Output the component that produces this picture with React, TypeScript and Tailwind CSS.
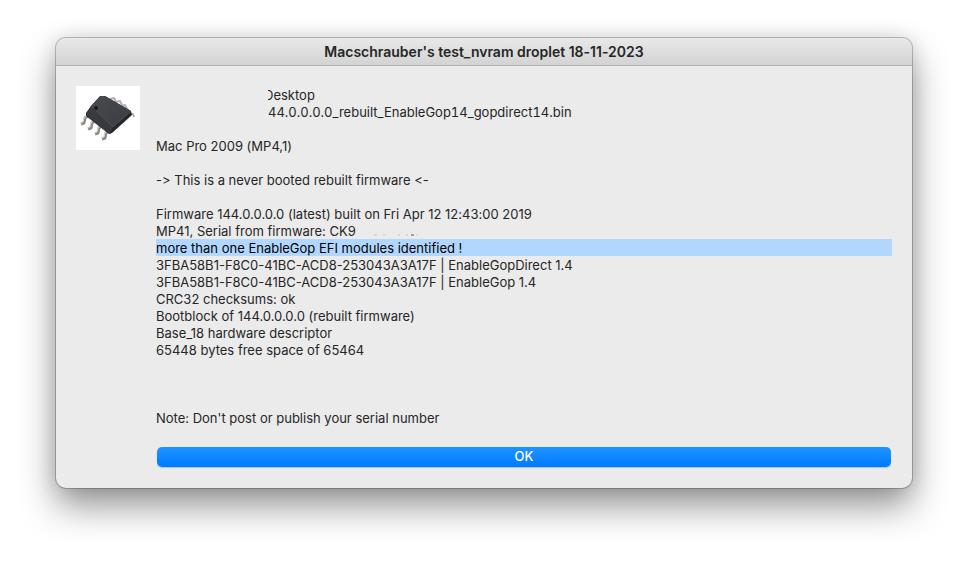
interface LogLine {
  text: string;
  kind?: 'highlight' | 'masked' | 'clipped' | 'serial';
}

const lines: LogLine[] = [
  { text: 'Desktop', kind: 'clipped' },
  { text: '44.0.0.0.0_rebuilt_EnableGop14_gopdirect14.bin', kind: 'masked' },
  { text: '' },
  { text: 'Mac Pro 2009 (MP4,1)' },
  { text: '' },
  { text: '-> This is a never booted rebuilt firmware <-' },
  { text: '' },
  { text: 'Firmware 144.0.0.0.0 (latest) built on Fri Apr 12 12:43:00 2019' },
  { text: 'MP41, Serial from firmware: CK9', kind: 'serial' },
  { text: 'more than one EnableGop EFI modules identified !', kind: 'highlight' },
  { text: '3FBA58B1-F8C0-41BC-ACD8-253043A3A17F | EnableGopDirect 1.4' },
  { text: '3FBA58B1-F8C0-41BC-ACD8-253043A3A17F | EnableGop 1.4' },
  { text: 'CRC32 checksums: ok' },
  { text: 'Bootblock of 144.0.0.0.0 (rebuilt firmware)' },
  { text: 'Base_18 hardware descriptor' },
  { text: '65448 bytes free space of 65464' },
  { text: '' },
  { text: '' },
  { text: '' },
  { text: "Note: Don't post or publish your serial number" },
];

function ChipIcon() {
  return (
    <svg viewBox="0 0 64 64" className="size-16 shrink-0 bg-white" role="img" aria-label="Flash chip">
      <defs>
        <linearGradient id="chip-top" x1="0" y1="0" x2="1" y2="1">
          <stop offset="0" stopColor="#4a4b50" />
          <stop offset="1" stopColor="#3b3c41" />
        </linearGradient>
      </defs>
      {/* rear pins */}
      <g stroke="#b5b0ab" strokeWidth="2" fill="none" strokeLinejoin="round">
        <path d="M34 13l4-1 2 4" />
        <path d="M40 16l4-1 2 4" />
        <path d="M46 20l3-1 2 4" />
        <path d="M53 28l4 0 1 3" />
      </g>
      {/* front pins */}
      <g fill="none" stroke="#8f8a85" strokeWidth="3" strokeLinejoin="round">
        <path d="M13 29l-4 3-1 5-3 1" />
        <path d="M20 34l-4 3-1 5-3 1" />
        <path d="M27 39l-4 3-1 5-3 1" />
        <path d="M34 44l-4 3-1 5-3 1" />
      </g>
      <g fill="none" stroke="#d8d3cd" strokeWidth="1">
        <path d="M12 29l-4 3-1 4-2 1" />
        <path d="M19 34l-4 3-1 4-2 1" />
        <path d="M26 39l-4 3-1 4-2 1" />
        <path d="M33 44l-4 3-1 4-2 1" />
      </g>
      <path d="M10 27L15 20 24 10l5 0 26 15 1 4-20 18-3 1-23-18z" fill="#2b2c30" />
      <path d="M15 20L25 10l4 0 26 15-18 16z" fill="url(#chip-top)" />
      <path d="M15 20l22 21-3 7-24-19z" fill="#393a3f" />
      <path d="M37 41l18-16v4L34 48z" fill="#26272b" />
      <path d="M15 20L37 41l18-16" fill="none" stroke="#505156" strokeWidth="1" />
      <ellipse cx="20" cy="22" rx="2" ry="2" fill="#17181b" />
    </svg>
  );
}

function MessageLine({ text, kind }: LogLine) {
  if (kind === 'highlight') {
    return <p className="h-[17px] bg-[#b2d7ff] pt-px text-black">{text}</p>;
  }
  if (kind === 'clipped') {
    return (
      <p className="ml-28 h-[17px] overflow-x-clip pt-px">
        <span className="-ml-1">{text}</span>
      </p>
    );
  }
  if (kind === 'masked') {
    return <p className="ml-28 h-[17px] pt-px tabular-nums">{text}</p>;
  }
  if (kind === 'serial') {
    return (
      <p className="flex h-[17px] pt-px">
        {text}
        <svg viewBox="0 0 64 16" className="ml-4 h-4 w-16 shrink-0" aria-hidden="true">
          <path d="M2 12h3M11 12h2M26 12h2M34 12h2M44 12h1" stroke="#c4c4c4" />
          <path d="M39 12h3" stroke="#555" />
        </svg>
      </p>
    );
  }
  return <p className="h-[17px] pt-px">{text}</p>;
}

export default function App() {
  return (
    <main className="min-h-screen bg-white px-14 pt-[38px] pb-[74px] font-['Inter','Liberation_Sans',sans-serif] text-[13px] leading-[17px] text-[#262626] [font-feature-settings:'calt'_0]">
      <section
        aria-labelledby="dialog-title"
        className="overflow-hidden rounded-[10px] bg-[#ebebeb] shadow-[0_0_0_1px_rgba(0,0,0,0.22),0_18px_36px_rgba(0,0,0,0.42),0_0_20px_rgba(0,0,0,0.12)]"
      >
        <header className="flex h-7 items-center justify-center border-b border-[#b1b1b1] bg-linear-to-b from-[#e9e9e9] to-[#d3d3d3]">
          <h1 id="dialog-title" className="text-sm leading-[17px] font-semibold">
            Macschrauber's test_nvram droplet 18-11-2023
          </h1>
        </header>
        <div className="flex items-start gap-4 px-5 pt-5 pb-[21px]">
          <ChipIcon />
          <div className="min-w-0 flex-1">
            {lines.map((line, index) => (
              <MessageLine key={index} text={line.text} kind={line.kind} />
            ))}
            <div className="px-px pt-[21px]">
              <button
                type="button"
                className="block h-5 w-full rounded-[5px] bg-linear-to-b from-[#1e93ff] to-[#007aff] pb-px text-center font-medium text-white shadow-[0_1px_1px_rgba(0,100,220,0.3)]"
              >
                OK
              </button>
            </div>
          </div>
        </div>
      </section>
    </main>
  );
}
